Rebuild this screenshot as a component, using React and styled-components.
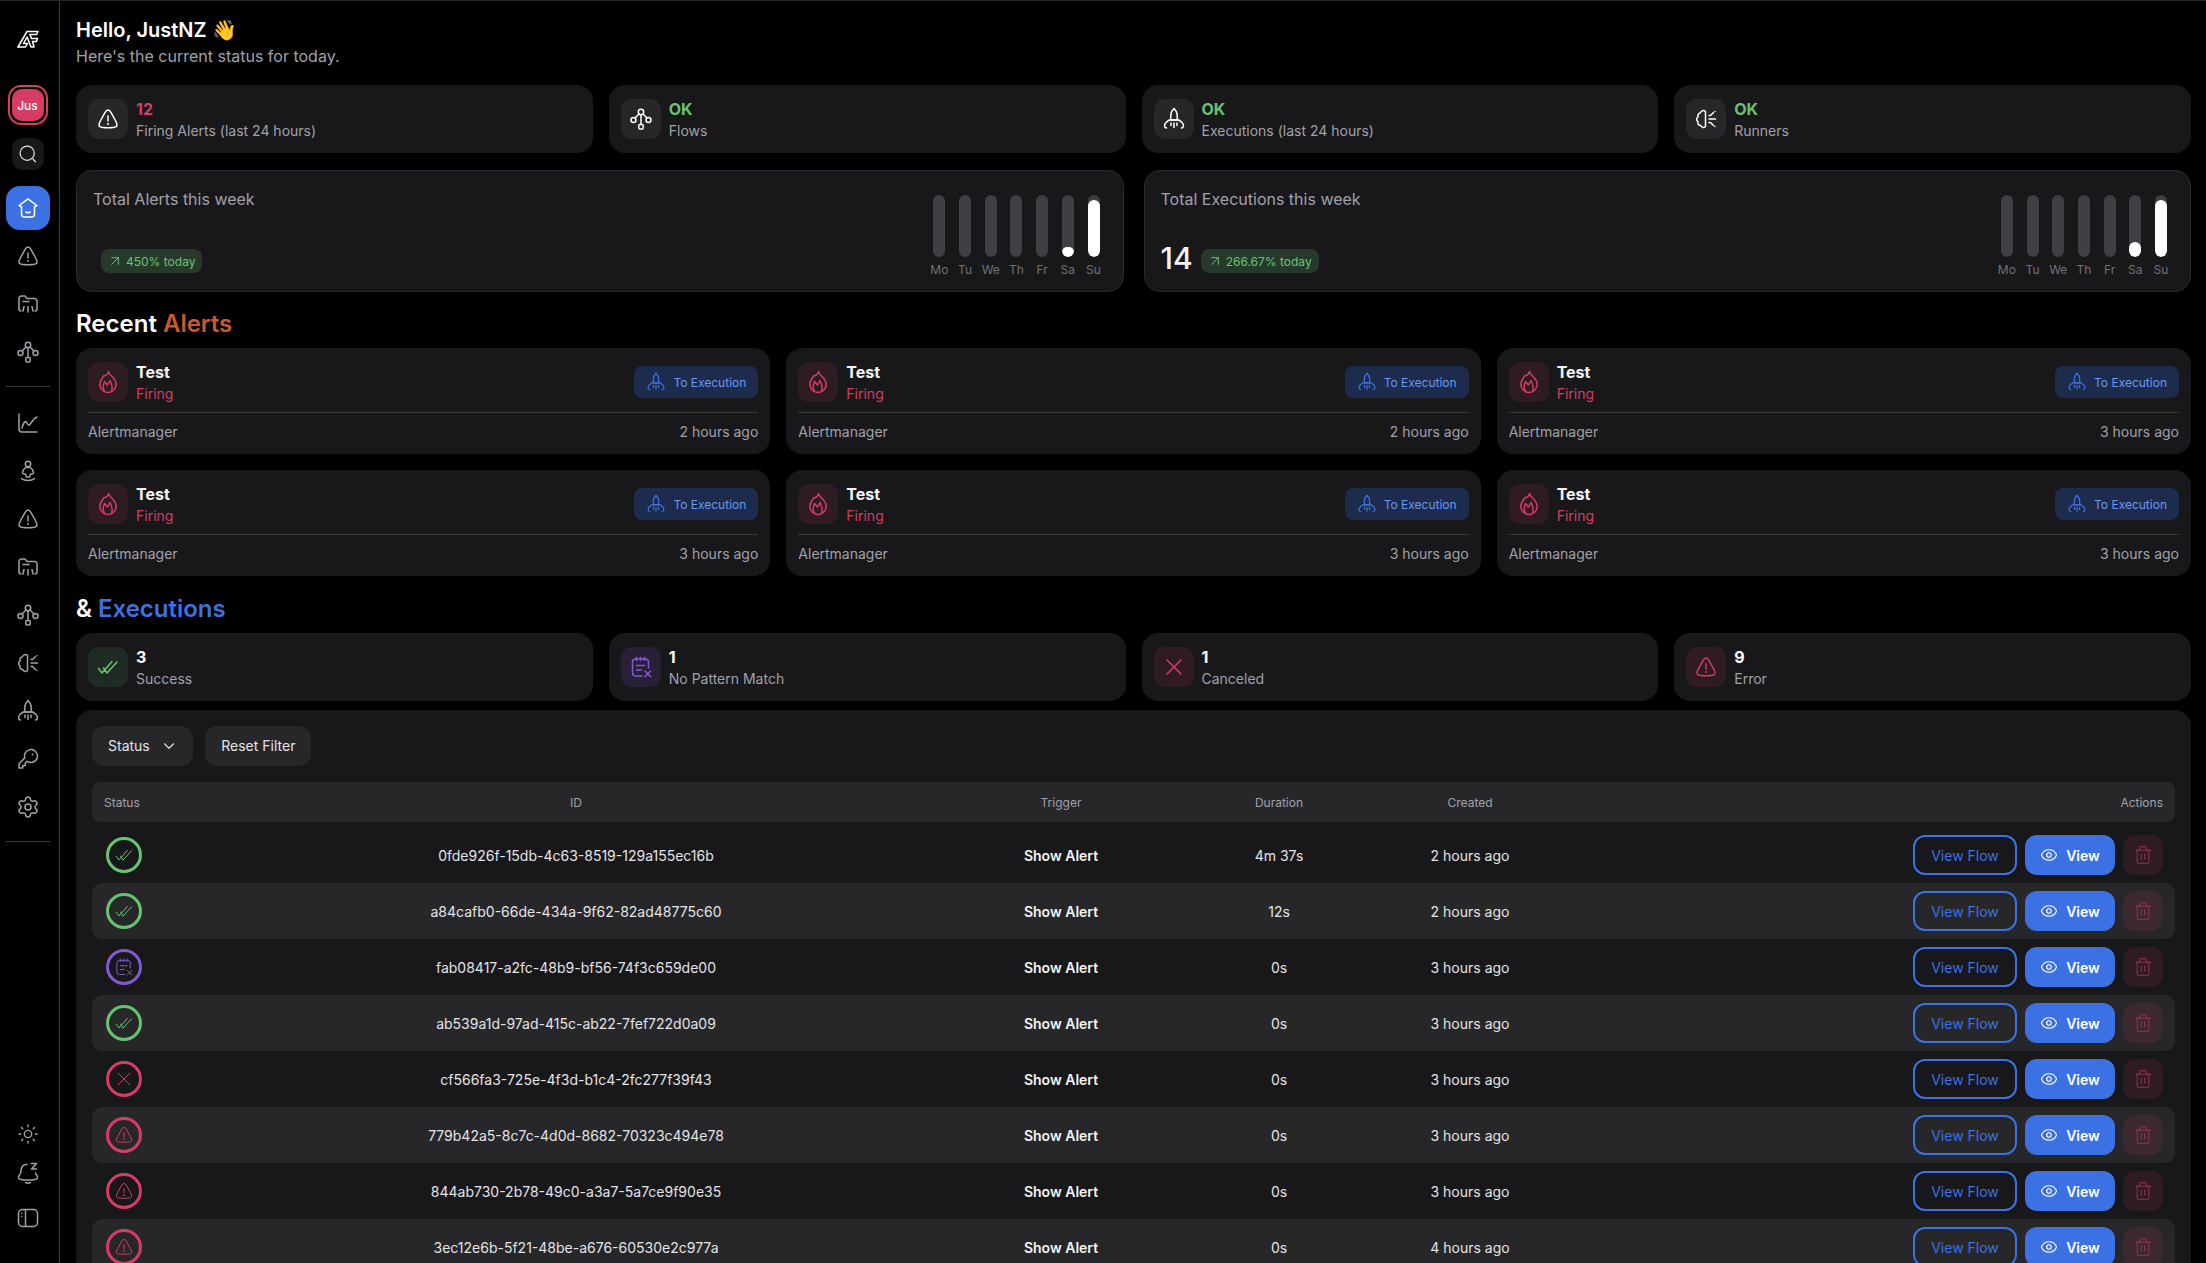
import React from "react";
import styled, { createGlobalStyle } from "styled-components";
import { ArrowUpRight, ChevronDown, Eye, Settings, Sun, Trash2 } from "lucide-react";

const primary = "#3c71e3";
const danger = "#d63c64";
const success = "#66c46f";
const violet = "#8458d2";

const GlobalStyle = createGlobalStyle`
  * { box-sizing: border-box; }
  html, body { margin: 0; height: 100%; background: #000; overflow: hidden; }
  body { font-family: Inter, "Liberation Sans", sans-serif; color: #fff; }
`;

const Glyph = styled.svg.attrs((p) => ({
  viewBox: p.$box || "0 0 24 24",
  width: p.$size || 24,
  height: p.$h || p.$size || 24,
  fill: "none",
  stroke: "currentColor",
  strokeWidth: p.$stroke || 1.5,
  strokeLinecap: "round",
  strokeLinejoin: "round",
}))`
  display: block;
  flex: none;
`;

const AlertIcon = (p) => (
  <Glyph {...p}>
    <path d="M12 3c-1.300 0-2.200 1-3.200 2.800L4.600 13.500c-1.700 3-2.100 4.400-1.200 5.700.9 1.300 2.500 1.500 8.600 1.500s7.700-.2 8.600-1.500c.9-1.300.5-2.700-1.200-5.700l-4.200-7.700C14.200 4 13.300 3 12 3Z" />
    <path d="M12 9v5" />
    <path d="M12 17v.01" strokeWidth="2" />
  </Glyph>
);

const FolderIcon = (p) => (
  <Glyph {...p}>
    <path d="M3 17V6.500A2.500 2.500 0 0 1 5.500 4H9l2 2.500h7.500A2.500 2.500 0 0 1 21 9v8c0 1.200-.8 2-2 2" />
    <path d="M3 17c0 1.200.8 2 2 2" />
    <path d="M8 14.500l-1 4.500M12 14.500V20M16 14.500l1 4.500M7 9.500h6" />
  </Glyph>
);

const FlowIcon = (p) => (
  <Glyph {...p}>
    <circle cx="12" cy="5" r="2.700" />
    <circle cx="4.500" cy="13" r="2.500" />
    <circle cx="19.500" cy="13" r="2.500" />
    <rect x="9.800" y="17.500" width="4.400" height="4.400" rx="1" />
    <path d="M10 7 6 11M14 7l4 4M12 7.700v9.800" />
  </Glyph>
);

const ChartIcon = (p) => (
  <Glyph {...p}>
    <path d="M3 3v15a3 3 0 0 0 3 3h15" />
    <path d="M6 17c1.500-6 3.500-8 5-5s2 3 4 0 3-5 6-6" />
  </Glyph>
);

const UserPinIcon = (p) => (
  <Glyph {...p}>
    <circle cx="12" cy="5" r="2.700" />
    <path d="M9.500 8.500h5c1.500 1.300 3 3.300 3 5 0 1.500-1.500 1.800-3 1.500L13.500 18h-3l-1-3c-1.500.3-3 0-3-1.500 0-1.700 1.500-3.700 3-5Z" />
    <path d="M5.500 19.500c3 2.700 10 2.700 13 0" />
  </Glyph>
);

const BrainIcon = (p) => (
  <Glyph {...p}>
    <path d="M11.500 4.700c-1.500-1.900-4.500-1.100-5 1C4.300 6.200 3.300 8.100 4.300 9.700c-2 1.200-2.200 3.800-.3 5.100-.8 2.100.8 4 2.900 3.800.5 2 3.600 2.600 4.600.8V4.700Z" />
    <path d="M15 12h6.500M15 8.500h1.500l3-3M15 15.500h1.500l3 3M21 4.500v.01M21 19.500v.01" />
  </Glyph>
);

const RocketIcon = (p) => (
  <Glyph {...p}>
    <path d="M12 1.500c-2 1.800-3.200 4.200-3.200 7V13h6.400V8.500c0-2.800-1.200-5.200-3.200-7Z" />
    <path d="M7.500 13h9M12 16v4.500M9 16v2.500M15 16v2.500" />
    <path d="M7.500 13C5 14.500 2.500 16 2.500 18.500c0 1.300.7 2.200 2 2.500" />
    <path d="M16.500 13c2.500 1.500 5 3 5 5.500 0 1.300-.7 2.200-2 2.500" />
  </Glyph>
);

const KeyIcon = (p) => (
  <Glyph {...p}>
    <path d="M15 15.500a6.500 6.500 0 1 0-6.200-4.600L3 16.700V21h3.800v-2.500h2.500V16l1.700-1.700c1.100.8 2.500 1.200 4 1.200Z" />
    <path d="M16.500 7.500v.01" strokeWidth="2" />
  </Glyph>
);

const BellZIcon = (p) => (
  <Glyph {...p}>
    <path d="M11 3.200c-3.500.4-6 3-6 6.600 0 3-1.200 3.700-2.300 5.400-.6 1.200 0 2.600 1.300 3 4 1.200 12 1.200 16 0 1.300-.4 1.900-1.800 1.300-3-.6-1-1.300-1.800-1.800-3" />
    <path d="M9.500 21.500c1.500.8 3.500.8 5 0" />
    <path d="M15.500 2.500h5l-5 5.500h5" />
  </Glyph>
);

const PanelIcon = (p) => (
  <Glyph {...p}>
    <rect x="2.500" y="3.500" width="19" height="17" rx="4" />
    <path d="M9.500 3.500v17M5.800 7.500v.01M5.800 10.500v.01" />
  </Glyph>
);

const HomeIcon = (p) => (
  <Glyph {...p}>
    <path d="M12 2.800 20.800 9.500 18.500 11v7a3 3 0 0 1-3 3h-7a3 3 0 0 1-3-3v-7L3.200 9.500 12 2.800Z" />
    <path d="M9.800 16c1.400.9 3 .9 4.400 0" />
  </Glyph>
);

const SearchIcon = (p) => (
  <Glyph {...p}>
    <circle cx="11" cy="11" r="8.500" />
    <path d="m18 18 3 3.500" />
  </Glyph>
);

const FireIcon = (p) => (
  <Glyph {...p}>
    <path d="M12.500 1.500c.3 3.500 6.500 6 7.500 11.500.9 5-3 9.500-8 9.500S3.100 18 4 13c.6-3.200 2.500-4.500 3.800-7.500 1.200.7 4.200-1 4.700-4Z" />
    <path d="M8.500 21c-2-2.500-1.500-6 0-9.500l3 3.500 2.500-4.500c1.500 3 3.200 7 1.500 10.500" />
  </Glyph>
);

const DoubleCheckIcon = (p) => (
  <Glyph {...p}>
    <path d="M2.500 13.500 6 18 16 6.500M11 18 21 7M7.500 13l3.500 5" />
  </Glyph>
);

const NoteXIcon = (p) => (
  <Glyph {...p}>
    <path d="M19.500 13V7a3 3 0 0 0-3-3h-10a3 3 0 0 0-3 3v11a3 3 0 0 0 3 3H13" />
    <path d="M7.500 2.500v3M11.500 2.500v3M15.500 2.500v3M7.500 10.500h8M7.500 15h5M16 16l5.500 5.500M21.500 16 16 21.500" />
  </Glyph>
);

const CrossIcon = (p) => (
  <Glyph {...p}>
    <path d="M5 5l14 14M19 5 5 19" />
  </Glyph>
);

const Page = styled.div`
  display: flex;
  height: 100vh;
  overflow: hidden;
  border-top: 1px solid #27272a;
`;

const Sidebar = styled.aside`
  flex: none;
  width: 60px;
  display: flex;
  flex-direction: column;
  align-items: center;
  padding: 29px 4px 33px 0;
  border-right: 1px solid #3a3a3e;
  color: #a1a1aa;
`;

const Logo = styled(Glyph)`
  color: #fff;
  margin-bottom: 37px;
`;

const Avatar = styled.div`
  width: 40px;
  height: 40px;
  flex: none;
  margin-bottom: 13px;
  display: flex;
  align-items: center;
  justify-content: center;
  border-radius: 13px;
  border: 2px solid ${danger};
  padding: 2px;
  span {
    width: 100%;
    height: 100%;
    display: flex;
    align-items: center;
    justify-content: center;
    border-radius: 10px;
    background: ${danger};
    color: #fff;
    font-size: 12px;
    font-weight: 500;
  }
`;

const SearchButton = styled.div`
  width: 32px;
  height: 32px;
  flex: none;
  margin-bottom: 16px;
  display: flex;
  align-items: center;
  justify-content: center;
  border-radius: 10px;
  background: #18181b;
  color: #e4e4e7;
`;

const NavItem = styled.div`
  width: 44px;
  height: 44px;
  flex: none;
  margin-bottom: 4px;
  display: flex;
  align-items: center;
  justify-content: center;
  border-radius: 14px;
  background: ${(p) => (p.$active ? primary : "transparent")};
  color: ${(p) => (p.$active ? "#fff" : "#a1a1aa")};
`;

const NavDivider = styled.hr`
  width: 44px;
  flex: none;
  margin: 8px 0 14px;
  border: 0;
  border-top: 1px solid #3a3a3e;
`;

const SidebarFooter = styled.div`
  margin-top: auto;
  display: flex;
  flex-direction: column;
  align-items: center;
  gap: 16px;
  svg:last-child {
    margin-top: 5px;
  }
`;

const Main = styled.main`
  flex: 1;
  min-width: 0;
  padding: 15px 15px 0 16px;
  overflow: hidden;
`;

const Title = styled.h1`
  margin: 0;
  font-size: 20px;
  line-height: 28px;
  font-weight: 600;
  color: #fff;
`;

const Subtitle = styled.p`
  margin: 0 0 17px;
  font-size: 16px;
  line-height: 24px;
  color: #a1a1aa;
`;

const StatGrid = styled.div`
  display: grid;
  grid-template-columns: repeat(4, 1fr);
  gap: 16px;
`;

const StatCard = styled.div`
  height: 68px;
  display: flex;
  align-items: center;
  gap: 8px;
  padding: 0 12px;
  border-radius: 16px;
  background: #18181b;
`;

const IconBox = styled.div`
  width: 40px;
  height: 40px;
  flex: none;
  display: flex;
  align-items: center;
  justify-content: center;
  border-radius: 11px;
  color: ${(p) => p.$color || "#fff"};
  background: ${(p) => p.$bg || "#27272a"};
`;

const TextStack = styled.div`
  padding-top: 2px;
`;

const StatValue = styled.div`
  font-size: 16px;
  line-height: 22px;
  font-weight: 700;
  color: ${(p) => p.$color || "#fff"};
`;

const StatLabel = styled.div`
  font-size: 14px;
  line-height: 22px;
  color: #a1a1aa;
`;

const WeekGrid = styled.div`
  display: grid;
  grid-template-columns: 1fr 1fr;
  gap: 20px;
  margin-top: 17px;
`;

const WeekCard = styled.div`
  height: 122px;
  display: flex;
  justify-content: space-between;
  padding: 16px 20px 0 16px;
  border: 1px solid #2b2b2f;
  border-radius: 16px;
  background: #18181b;
`;

const WeekInfo = styled.div`
  display: flex;
  flex-direction: column;
  justify-content: space-between;
  padding-bottom: 18px;
`;

const WeekTitle = styled.div`
  font-size: 16px;
  line-height: 24px;
  color: #a1a1aa;
`;

const WeekFoot = styled.div`
  display: flex;
  align-items: center;
  gap: 8px;
  height: 24px;
`;

const WeekTotal = styled.span`
  align-self: flex-start;
  font-size: 30px;
  line-height: 18px;
  font-weight: 500;
  color: #f4f4f5;
`;

const Trend = styled.span`
  height: 24px;
  display: inline-flex;
  align-items: center;
  gap: 3px;
  padding: 0 7px 0 6px;
  border-radius: 8px;
  font-size: 12px;
  color: ${success};
  background: #263a2b;
`;

const Bars = styled.div`
  display: flex;
  gap: 7.700px;
  padding: 8px 0 0;
`;

const BarColumn = styled.div`
  width: 18px;
  display: flex;
  flex-direction: column;
  align-items: center;
  gap: 5px;
  font-size: 12px;
  line-height: 16px;
  color: #71717a;
`;

const BarTrack = styled.div`
  position: relative;
  width: 12px;
  height: 62px;
  border-radius: 6px;
  background: #3f3f46;
  overflow: hidden;
`;

const BarFill = styled.div`
  position: absolute;
  left: 0;
  right: 0;
  bottom: 0;
  border-radius: 6px;
  background: #fff;
`;

const Heading = styled.h2`
  margin: ${(p) => p.$margin};
  font-size: 24px;
  line-height: 32px;
  font-weight: 600;
  color: #fff;
  span {
    color: ${(p) => p.$accent};
  }
`;

const AlertGrid = styled.div`
  display: grid;
  grid-template-columns: repeat(3, 1fr);
  gap: 16px;
`;

const AlertCard = styled.div`
  height: 106px;
  padding: 14px 12px 0;
  border-radius: 16px;
  background: #18181b;
`;

const AlertTop = styled.div`
  height: 51px;
  display: flex;
  align-items: center;
  gap: 8px;
  padding-bottom: 10px;
  border-bottom: 1px solid #3a3a3e;
`;

const AlertName = styled.div`
  font-size: 16px;
  line-height: 22px;
  font-weight: 700;
  color: #f4f4f5;
`;

const AlertState = styled.div`
  font-size: 14px;
  line-height: 22px;
  color: ${danger};
`;

const ExecutionLink = styled.div`
  height: 32px;
  margin-left: auto;
  display: flex;
  align-items: center;
  gap: 7px;
  padding: 0 12px;
  border-radius: 8px;
  font-size: 12px;
  color: #6d97f0;
  background: #1d2c4d;
  svg {
    color: ${primary};
  }
`;

const AlertFoot = styled.div`
  display: flex;
  justify-content: space-between;
  padding-top: 9px;
  font-size: 14px;
  line-height: 20px;
  color: #a1a1aa;
`;

const TableCard = styled.section`
  margin-top: 9px;
  padding: 16px;
  border-radius: 16px 16px 0 0;
  background: #18181b;
`;

const Filters = styled.div`
  display: flex;
  gap: 12px;
  margin-bottom: 16px;
`;

const FilterButton = styled.div`
  height: 40px;
  display: flex;
  align-items: center;
  gap: 10px;
  padding: 0 15.500px 1px 16px;
  border-radius: 12px;
  font-size: 14px;
  color: #e4e4e7;
  background: #27272a;
`;

const columns = "118px 708px 262px 174px 208px 1fr";

const TableHead = styled.div`
  display: grid;
  grid-template-columns: ${columns};
  align-items: center;
  height: 40px;
  margin-bottom: 5px;
  padding: 0 12px;
  border-radius: 8px;
  font-size: 12px;
  font-weight: 600;
  color: #a1a1aa;
  background: #27272a;
`;

const TableRow = styled.div`
  display: grid;
  grid-template-columns: ${columns};
  align-items: center;
  height: 56px;
  padding: 0 12px;
  border-radius: 10px;
  font-size: 14px;
  color: #e4e4e7;
  background: ${(p) => (p.$striped ? "#27272a" : "transparent")};
`;

const Cell = styled.div`
  text-align: ${(p) => p.$align || "center"};
  font-weight: ${(p) => p.$weight || 400};
  color: ${(p) => p.$color || "inherit"};
`;

const StatusRing = styled.div`
  width: 36px;
  height: 36px;
  margin-left: 2px;
  display: flex;
  align-items: center;
  justify-content: center;
  border-radius: 50%;
  border: 3.500px solid ${(p) => p.$color};
  color: ${(p) => p.$color};
`;

const Actions = styled.div`
  display: flex;
  justify-content: flex-end;
  gap: 8px;
`;

const ActionButton = styled.div`
  height: 40px;
  display: flex;
  align-items: center;
  justify-content: center;
  gap: 8px;
  border-radius: 12px;
  font-size: 14px;
`;

const FlowButton = styled(ActionButton)`
  width: 104px;
  border: 2px solid ${primary};
  color: ${primary};
`;

const ViewButton = styled(ActionButton)`
  width: 90px;
  font-weight: 600;
  color: #fff;
  background: ${primary};
`;

const DeleteButton = styled(ActionButton)`
  width: 40px;
  color: rgba(214, 60, 100, 0.5);
  background: rgba(214, 60, 100, 0.12);
`;

const stats = [
  { value: "12", color: danger, label: "Firing Alerts (last 24 hours)", Icon: AlertIcon },
  { value: "OK", color: success, label: "Flows", Icon: FlowIcon },
  { value: "OK", color: success, label: "Executions (last 24 hours)", Icon: RocketIcon },
  { value: "OK", color: success, label: "Runners", Icon: BrainIcon },
];

const days = ["Mo", "Tu", "We", "Th", "Fr", "Sa", "Su"];

const weeks = [
  { title: "Total Alerts this week", total: "", trend: "450% today", saturday: 10 },
  { title: "Total Executions this week", total: "14", trend: "266.67% today", saturday: 15 },
];

const alerts = ["2 hours ago", "2 hours ago", "3 hours ago", "3 hours ago", "3 hours ago", "3 hours ago"];

const summary = [
  { value: "3", label: "Success", Icon: DoubleCheckIcon, color: success, bg: "#1f2c23" },
  { value: "1", label: "No Pattern Match", Icon: NoteXIcon, color: violet, bg: "#272038" },
  { value: "1", label: "Canceled", Icon: CrossIcon, color: danger, bg: "#2e1c22" },
  { value: "9", label: "Error", Icon: AlertIcon, color: danger, bg: "#2e1c22" },
];

const statusKinds = {
  success: { Icon: DoubleCheckIcon, color: success },
  pattern: { Icon: NoteXIcon, color: violet },
  canceled: { Icon: CrossIcon, color: danger },
  error: { Icon: AlertIcon, color: danger },
};

const executions = [
  { status: "success", id: "0fde926f-15db-4c63-8519-129a155ec16b", duration: "4m 37s", created: "2 hours ago" },
  { status: "success", id: "a84cafb0-66de-434a-9f62-82ad48775c60", duration: "12s", created: "2 hours ago" },
  { status: "pattern", id: "fab08417-a2fc-48b9-bf56-74f3c659de00", duration: "0s", created: "3 hours ago" },
  { status: "success", id: "ab539a1d-97ad-415c-ab22-7fef722d0a09", duration: "0s", created: "3 hours ago" },
  { status: "canceled", id: "cf566fa3-725e-4f3d-b1c4-2fc277f39f43", duration: "0s", created: "3 hours ago" },
  { status: "error", id: "779b42a5-8c7c-4d0d-8682-70323c494e78", duration: "0s", created: "3 hours ago" },
  { status: "error", id: "844ab730-2b78-49c0-a3a7-5a7ce9f90e35", duration: "0s", created: "3 hours ago" },
  { status: "error", id: "3ec12e6b-5f21-48be-a676-60530e2c977a", duration: "0s", created: "4 hours ago" },
];

function WeekBars({ saturday }) {
  const heights = [0, 0, 0, 0, 0, saturday, 57];
  return (
    <Bars>
      {days.map((day, i) => (
        <BarColumn key={day}>
          <BarTrack>{heights[i] > 0 && <BarFill style={{ height: heights[i] }} />}</BarTrack>
          {day}
        </BarColumn>
      ))}
    </Bars>
  );
}

export default function App() {
  return (
    <Page>
      <GlobalStyle />
      <Sidebar>
        <Logo $box="0 0 22 18" $size={22} $h={18}>
          <path d="M1 17 10 1.500H21L19.500 4.500H13" />
          <path d="M1 17H8.500L10.500 13.500H6.500L10 7 14 17H17L15.500 11.500H19.500L20.500 8.500H14.500L13 4.500" />
        </Logo>
        <Avatar>
          <span>Jus</span>
        </Avatar>
        <SearchButton>
          <SearchIcon $size={20} />
        </SearchButton>
        <NavItem $active>
          <HomeIcon />
        </NavItem>
        <NavItem>
          <AlertIcon />
        </NavItem>
        <NavItem>
          <FolderIcon />
        </NavItem>
        <NavItem>
          <FlowIcon />
        </NavItem>
        <NavDivider />
        <NavItem>
          <ChartIcon />
        </NavItem>
        <NavItem>
          <UserPinIcon />
        </NavItem>
        <NavItem>
          <AlertIcon />
        </NavItem>
        <NavItem>
          <FolderIcon />
        </NavItem>
        <NavItem>
          <FlowIcon />
        </NavItem>
        <NavItem>
          <BrainIcon />
        </NavItem>
        <NavItem>
          <RocketIcon />
        </NavItem>
        <NavItem>
          <KeyIcon />
        </NavItem>
        <NavItem>
          <Settings size={24} strokeWidth={1.500} />
        </NavItem>
        <NavDivider />
        <SidebarFooter>
          <Sun size={22} strokeWidth={1.500} />
          <BellZIcon />
          <PanelIcon />
        </SidebarFooter>
      </Sidebar>

      <Main>
        <Title>Hello, JustNZ 👋</Title>
        <Subtitle>Here's the current status for today.</Subtitle>

        <StatGrid>
          {stats.map(({ value, color, label, Icon }) => (
            <StatCard key={label}>
              <IconBox>
                <Icon />
              </IconBox>
              <TextStack>
                <StatValue $color={color}>{value}</StatValue>
                <StatLabel>{label}</StatLabel>
              </TextStack>
            </StatCard>
          ))}
        </StatGrid>

        <WeekGrid>
          {weeks.map((week) => (
            <WeekCard key={week.title}>
              <WeekInfo>
                <WeekTitle>{week.title}</WeekTitle>
                <WeekFoot>
                  <WeekTotal>{week.total}</WeekTotal>
                  <Trend>
                    <ArrowUpRight size={16} strokeWidth={1.500} />
                    {week.trend}
                  </Trend>
                </WeekFoot>
              </WeekInfo>
              <WeekBars saturday={week.saturday} />
            </WeekCard>
          ))}
        </WeekGrid>

        <Heading $margin="16px 0 8px" $accent="#c75b2c">
          Recent <span>Alerts</span>
        </Heading>

        <AlertGrid>
          {alerts.map((ago, i) => (
            <AlertCard key={i}>
              <AlertTop>
                <IconBox $color={danger} $bg="#2e1c22">
                  <FireIcon />
                </IconBox>
                <TextStack>
                  <AlertName>Test</AlertName>
                  <AlertState>Firing</AlertState>
                </TextStack>
                <ExecutionLink>
                  <RocketIcon $size={20} />
                  To Execution
                </ExecutionLink>
              </AlertTop>
              <AlertFoot>
                <span>Alertmanager</span>
                <span>{ago}</span>
              </AlertFoot>
            </AlertCard>
          ))}
        </AlertGrid>

        <Heading $margin="17px 0 8px" $accent={primary}>
          & <span>Executions</span>
        </Heading>

        <StatGrid>
          {summary.map(({ value, label, Icon, color, bg }) => (
            <StatCard key={label}>
              <IconBox $color={color} $bg={bg}>
                <Icon />
              </IconBox>
              <TextStack>
                <StatValue>{value}</StatValue>
                <StatLabel>{label}</StatLabel>
              </TextStack>
            </StatCard>
          ))}
        </StatGrid>

        <TableCard>
          <Filters>
            <FilterButton>
              Status
              <ChevronDown size={18} strokeWidth={1.500} />
            </FilterButton>
            <FilterButton>Reset Filter</FilterButton>
          </Filters>
          <TableHead>
            <Cell $align="left">Status</Cell>
            <Cell>ID</Cell>
            <Cell>Trigger</Cell>
            <Cell>Duration</Cell>
            <Cell>Created</Cell>
            <Cell $align="right">Actions</Cell>
          </TableHead>
          {executions.map((row, i) => {
            const { Icon, color } = statusKinds[row.status];
            return (
              <TableRow key={row.id} $striped={i % 2 === 1}>
                <StatusRing $color={color}>
                  <Icon $size={20} $stroke={1.200} />
                </StatusRing>
                <Cell>{row.id}</Cell>
                <Cell $weight={600} $color="#f4f4f5">
                  Show Alert
                </Cell>
                <Cell>{row.duration}</Cell>
                <Cell>{row.created}</Cell>
                <Actions>
                  <FlowButton>View Flow</FlowButton>
                  <ViewButton>
                    <Eye size={18} strokeWidth={1.500} />
                    View
                  </ViewButton>
                  <DeleteButton>
                    <Trash2 size={20} strokeWidth={1.500} />
                  </DeleteButton>
                </Actions>
              </TableRow>
            );
          })}
        </TableCard>
      </Main>
    </Page>
  );
}
